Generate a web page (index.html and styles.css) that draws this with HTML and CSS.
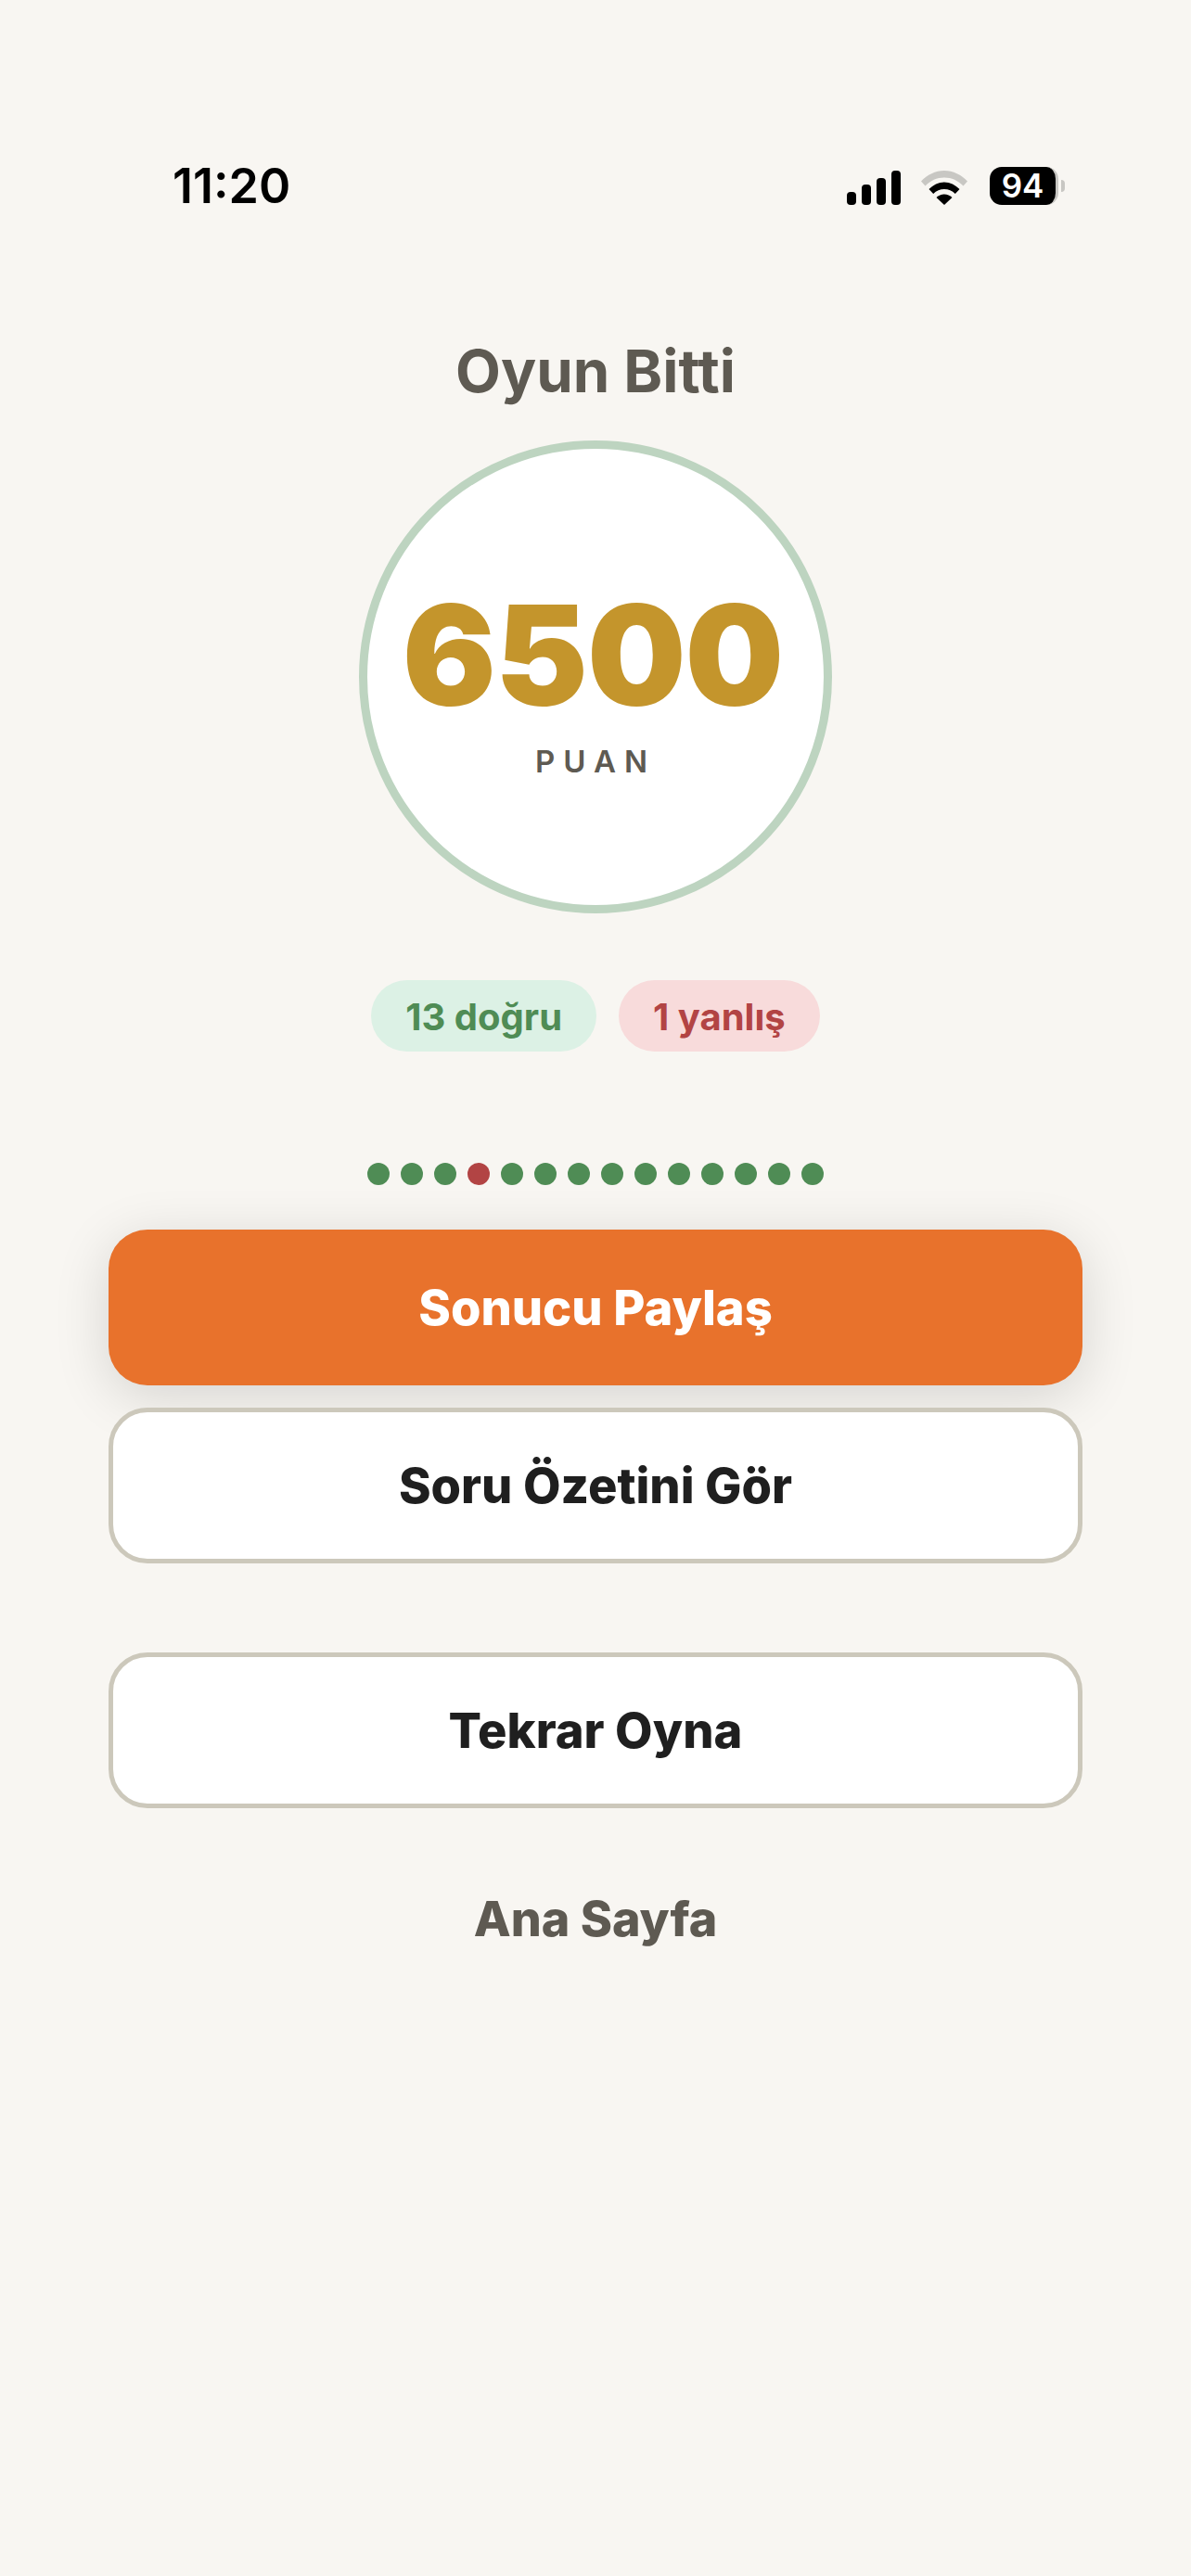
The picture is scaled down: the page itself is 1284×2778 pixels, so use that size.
FILE: index.html
```html
<!DOCTYPE html>
<html lang="tr">
<head>
<meta charset="utf-8">
<title>Oyun Bitti</title>
<link rel="stylesheet" href="styles.css">
</head>
<body>
<main class="screen">
  <header class="status">
    <span class="time">11:20</span>
    <div class="status-icons">
      <svg class="signal" width="58" height="37" viewBox="0 0 58 37"><rect x="0" y="23" width="10" height="14" rx="4"/><rect x="16" y="15" width="10" height="22" rx="4"/><rect x="32" y="8" width="10" height="29" rx="4"/><rect x="48" y="0" width="10" height="37" rx="4"/></svg>
      <svg class="wifi" width="50" height="37" viewBox="0 0 50 37"><path d="M0 11.5C6.500 4.500 15.500 0 25 0s18.500 4.500 25 11.500l-4.500 5C40 10.800 33 7.500 25 7.500S10 10.800 4.500 16.500z" fill="#c8c7c3"/><path d="M8.500 20C13 15.500 18.700 12.500 25 12.500S37 15.500 41.500 20l-4.700 5C33.500 21.800 29.500 20 25 20s-8.500 1.800-11.800 5z"/><path d="M16.500 29c2.300-2.200 5.200-3.500 8.500-3.500s6.200 1.300 8.500 3.500L25 37z"/></svg>
      <div class="battery"><span class="battery-body">94</span><span class="battery-nub"></span></div>
    </div>
  </header>

  <h1 class="title">Oyun Bitti</h1>

  <section class="score-ring">
    <div class="score">6500</div>
    <div class="score-label">PUAN</div>
  </section>

  <div class="pills">
    <span class="pill pill-good">13 doğru</span>
    <span class="pill pill-bad">1 yanlış</span>
  </div>

  <div class="dots">
    <i class="dot"></i><i class="dot"></i><i class="dot"></i><i class="dot dot-bad"></i><i class="dot"></i><i class="dot"></i><i class="dot"></i><i class="dot"></i><i class="dot"></i><i class="dot"></i><i class="dot"></i><i class="dot"></i><i class="dot"></i><i class="dot"></i>
  </div>

  <div class="actions">
    <button class="btn btn-primary">Sonucu Paylaş</button>
    <button class="btn btn-outline">Soru Özetini Gör</button>
    <button class="btn btn-outline btn-spaced">Tekrar Oyna</button>
    <button class="btn-link">Ana Sayfa</button>
  </div>
</main>
</body>
</html>
```
FILE: styles.css
```css
* { box-sizing: border-box; }
html, body { margin: 0; padding: 0; }
body {
  background: #f8f6f2;
  font-family: Inter, "Noto Sans", sans-serif;
  color: #1f1f1f;
}
.screen {
  width: 1284px;
  height: 2778px;
  overflow: hidden;
  display: flex;
  flex-direction: column;
  align-items: center;
}
.status {
  width: 100%;
  height: 100px;
  margin-top: 150px;
  padding: 0 136px 0 186px;
  display: flex;
  justify-content: space-between;
  align-items: flex-start;
}
.time {
  font-size: 52px;
  line-height: 102px;
  font-weight: 600;
  color: #000;
}
.status-icons {
  display: flex;
  align-items: center;
  margin-top: 30px;
  height: 41px;
}
.signal { margin-top: 4px; display: block; }
.wifi { margin-left: 22px; margin-top: 4px; display: block; }
.battery { margin-left: 24px; display: flex; align-items: center; }
.battery-body {
  width: 74px;
  height: 41px;
  background: #000;
  border-radius: 13px;
  border-right: 3px solid #c8c7c3;
  color: #fff;
  font-size: 35px;
  font-weight: 600;
  line-height: 41px;
  text-align: center;
}
.battery-nub {
  width: 4px;
  height: 13px;
  margin-left: 3px;
  background: #c8c7c3;
  border-radius: 0 4px 4px 0;
}
.title {
  margin: 110px 0 0;
  font-size: 63.5px;
  line-height: 80px;
  font-weight: 700;
  color: #5e5a52;
}
.score-ring {
  width: 510px;
  height: 510px;
  margin-top: 35px;
  padding-top: 12px;
  border: 9px solid #bdd4c0;
  border-radius: 50%;
  background: #fff;
  display: flex;
  flex-direction: column;
  align-items: center;
  justify-content: center;
}
.score {
  margin-right: 6px;
  font-size: 150px;
  line-height: 150px;
  font-weight: 900;
  letter-spacing: -1px;
  color: #c4952c;
}
.score-label {
  margin-top: 19px;
  font-size: 33px;
  line-height: 40px;
  font-weight: 600;
  letter-spacing: 9px;
  color: #5e5a52;
}
.pills {
  display: flex;
  gap: 24px;
  margin-top: 72px;
}
.pill {
  height: 77px;
  padding: 0 37px;
  border-radius: 39px;
  font-size: 40px;
  line-height: 79px;
  font-weight: 700;
}
.pill-good { background: #dcf1e5; color: #4f8c55; }
.pill-bad { background: #f8dbdb; color: #b24444; }
.dots {
  display: flex;
  gap: 12px;
  margin-top: 120px;
}
.dot {
  width: 24px;
  height: 24px;
  border-radius: 50%;
  background: #4f8c55;
}
.dot-bad { background: #b24444; }
.actions {
  width: 1050px;
  margin-top: 48px;
  display: flex;
  flex-direction: column;
  align-items: stretch;
}
.btn {
  height: 168px;
  border-radius: 42px;
  font-family: inherit;
  font-size: 52.5px;
  font-weight: 800;
  padding: 0;
}
.btn-primary {
  border: 0;
  background: #e8722c;
  color: #fff;
  box-shadow: 0 12px 60px rgba(0, 0, 0, 0.14);
}
.btn-outline {
  margin-top: 24px;
  border: 5px solid #ccc8bb;
  background: #fff;
  color: #1f1f1f;
}
.btn-spaced { margin-top: 96px; }
.btn-link {
  margin-top: 80px;
  border: 0;
  background: none;
  padding: 0;
  font-family: inherit;
  font-size: 52px;
  line-height: 80px;
  font-weight: 800;
  color: #5e5a52;
}
```
